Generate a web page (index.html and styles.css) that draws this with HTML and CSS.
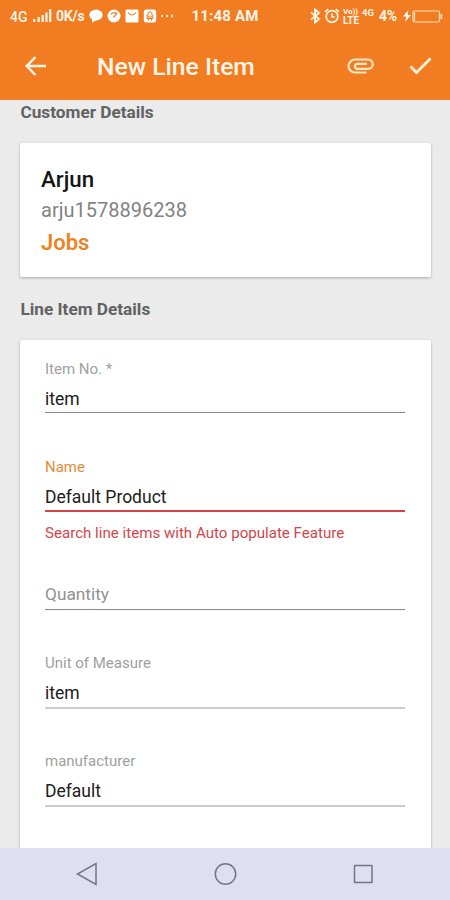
FILE: index.html
```html
<!DOCTYPE html>
<html lang="en">
<head>
<meta charset="utf-8">
<title>New Line Item</title>
<link rel="stylesheet" href="styles.css">
</head>
<body>
<div class="screen">
  <header class="top">
    <div class="status">
      <div class="status-left">
        <span class="net">4G</span>
        <svg class="signal" width="19" height="14" viewBox="0 0 19 14" fill="#fff3e0"><path d="M0 10h2.300v3H0zM4.500 8h2.300v5H4.500zM8.500 6h2.300v7H8.500zM12.300 3.500h2.300V13h-2.300zM16 0h2.300v13H16z"/></svg>
        <span class="speed">0K/s</span>
        <svg width="14" height="14" viewBox="0 0 14 14" fill="#fff"><ellipse cx="7" cy="6" rx="6.700" ry="5.400"/><path d="M3 9v4.500L8 11z"/></svg>
        <svg width="14" height="14" viewBox="0 0 14 14"><circle cx="7" cy="7" r="6.500" fill="#fff"/><path d="M3.800 5.200Q7 2.500 9.800 4.500L6.500 8.300" fill="none" stroke="#f07b20" stroke-width="1.200"/></svg>
        <svg width="14" height="14" viewBox="0 0 14 14"><rect x=".5" y=".5" width="13" height="13" rx="1.500" fill="#fff"/><path d="M3 3.500q4 5 8 0" fill="none" stroke="#f07b20" stroke-width="1.200"/></svg>
        <svg width="14" height="14" viewBox="0 0 14 14"><rect x=".8" y=".5" width="12.400" height="13" rx="2.500" fill="#fff"/><path d="M5 5a2 2.300 0 0 1 4 0v3H5zM4 6v3.500h6V6M5.500 10v1.500M8.500 10v1.500" fill="none" stroke="#f07b20" stroke-width="1"/></svg>
        <svg width="14" height="14" viewBox="0 0 14 14" fill="#fff3e0"><circle cx="1" cy="7" r="1.200"/><circle cx="6" cy="7" r="1.200"/><circle cx="11" cy="7" r="1.200"/></svg>
      </div>
      <span class="clock">11:48 AM</span>
      <div class="status-right">
        <svg width="11" height="16" viewBox="0 0 11 16" fill="none" stroke="#fff3e0" stroke-width="1.900"><path d="M1 4.500 9 11l-4 3.500v-13L9 5l-8 6.500"/></svg>
        <svg class="alarm" width="16" height="16" viewBox="0 0 16 16" fill="none" stroke="#fff3e0" stroke-width="1.700"><circle cx="8" cy="8.500" r="5.800"/><path d="M1 4l3.300-2.800M15 4l-3.300-2.800M8 5.500V9h3"/></svg>
        <span class="volte"><span>Vo))</span><span class="lte">LTE</span></span>
        <span class="net-small">4G</span>
        <span class="percent">4%</span>
        <svg class="bolt" width="8" height="12" viewBox="0 0 8 12" fill="#fff"><path d="M5.500 0 0 6.500h3.300L2 12l6-7H4.500z"/></svg>
        <svg class="battery" width="31" height="13" viewBox="0 0 31 13" fill="none" stroke="#ffe0b8" stroke-width="1.200"><rect x="1" y="1" width="26.500" height="11" rx="1.500"/><path d="M2.500 2v9" /><path d="M29.300 4v5" stroke-width="1.800"/></svg>
      </div>
    </div>
    <div class="appbar">
      <svg class="back" width="22" height="20" viewBox="0 0 22 20" fill="none" stroke="#fff5e8" stroke-width="2.500"><path d="M21 10H2M10.500 1 1.700 10l8.800 9"/></svg>
      <h1>New Line Item</h1>
      <svg class="clip" width="27" height="18" viewBox="0 0 27 18" fill="none" stroke="#ffe8c8" stroke-width="2.200"><path d="M19.500 15.500H8A6.500 6.500 0 0 1 8 2.500h13a4.700 4.700 0 0 1 0 9.400H10.500a2.300 2.300 0 0 1 0-5.100H20"/></svg>
      <svg class="check" width="23" height="18" viewBox="0 0 23 18" fill="none" stroke="#fff0d8" stroke-width="2.800"><path d="m1.500 9.500 6 6L21.500 1.500"/></svg>
    </div>
  </header>
  <main>
    <h2 class="customer-title">Customer Details</h2>
    <section class="card customer">
      <div class="name">Arjun</div>
      <div class="id">arju1578896238</div>
      <div class="jobs">Jobs</div>
    </section>
    <h2 class="line-title">Line Item Details</h2>
    <section class="card form">
      <div class="field">
        <label>Item No. *</label>
        <div class="value">item</div>
      </div>
      <div class="field error">
        <label>Name</label>
        <div class="value">Default Product</div>
        <p>Search line items with Auto populate Feature</p>
      </div>
      <div class="field empty">
        <div class="value">Quantity</div>
      </div>
      <div class="field light">
        <label>Unit of Measure</label>
        <div class="value">item</div>
      </div>
      <div class="field light">
        <label>manufacturer</label>
        <div class="value">Default</div>
      </div>
    </section>
  </main>
  <nav>
    <svg width="24" height="26" viewBox="0 0 24 26"><path d="M21 2.500v21L2.500 13z"/></svg>
    <svg width="24" height="26" viewBox="0 0 24 26"><circle cx="12.500" cy="13" r="10.200"/></svg>
    <svg width="24" height="26" viewBox="0 0 24 26"><rect x="3.500" y="4.500" width="17.500" height="17" rx=".5"/></svg>
  </nav>
</div>
</body>
</html>
```

FILE: styles.css
```css
* { box-sizing: border-box; }
body { margin: 0; font-family: Roboto, "Liberation Sans", sans-serif; }
h1, h2, p { margin: 0; }
svg { display: block; flex: none; }
.screen { width: 450px; height: 900px; display: flex; flex-direction: column; overflow: hidden; }
.top { height: 100px; flex: none; background: #f27c21; color: #fff5e8; }

.status { height: 32px; display: flex; align-items: center; padding: 0 7px 0 10px; font-weight: 500; white-space: nowrap; }
.status-left { width: 182px; display: flex; align-items: center; gap: 4px; }
.net { width: 19px; font-size: 14px; margin-top: 2px; }
.signal { margin-top: -1px; }
.speed { width: 28px; font-size: 14px; font-weight: 700; letter-spacing: -0.2px; margin-right: 1px; }
.clock { width: 117px; font-size: 15px; font-weight: 700; letter-spacing: 0.2px; }
.status-right { display: flex; align-items: center; margin-left: 2px; }
.alarm { margin-left: 3px; }
.volte { width: 17px; margin-left: 3px; display: flex; flex-direction: column; font-size: 8px; line-height: 10px; font-weight: 700; }
.lte { font-size: 10px; line-height: 10px; margin-top: -1px; }
.net-small { width: 13px; margin: -6px 0 0 2px; font-size: 9.5px; font-weight: 700; line-height: 10px; }
.percent { width: 20px; margin-left: 4px; font-size: 14px; letter-spacing: -0.4px; font-weight: 700; }
.bolt { margin-left: 4px; }
.battery { margin-left: 1px; }

.appbar { height: 68px; display: flex; align-items: center; padding: 0 18px 0 25px; }
h1 { width: 200px; margin-left: 50px; font-size: 24.7px; line-height: 30px; font-weight: 500; margin-top: 2px; white-space: nowrap; }
.clip { margin-left: 50px; }
.check { margin-left: auto; }

main { flex: 1; min-height: 0; overflow: hidden; background: #ebebeb; padding: 0 20px; }
h2 { font-size: 17.2px; line-height: 24px; font-weight: 700; color: #626262; padding-left: .5px; }
.card { background: #fff; border-radius: 2px; box-shadow: 0 1px 3px rgba(0, 0, 0, .28); width: 411px; }
.customer { height: 134px; margin-top: 19px; padding: 21px 21px; }
.customer div { line-height: 31px; white-space: nowrap; }
.name { font-size: 22.3px; font-weight: 500; color: #151515; }
.id { font-size: 20px; color: #828282; }
.customer .jobs { font-size: 22px; font-weight: 600; color: #ec841f; line-height: 33px; }
.line-title { margin-top: 20px; }
.form { height: 600px; margin-top: 19px; padding: 18px 26px 0 25px; }
.field { height: 98px; }
.field label { display: block; font-size: 15px; line-height: 22px; color: #a0a0a0; }
.value { box-sizing: content-box; height: 28px; line-height: 30px; padding-top: 4px; font-size: 17.5px; color: #202020; border-bottom: 1px solid #888; }
.error { height: 121px; }
.error label { color: #e58b38; }
.error .value { border-bottom: 2px solid #d94148; }
.error p { font-size: 15.1px; line-height: 22px; margin-top: 10px; color: #d2454b; white-space: nowrap; }
.empty { height: 75px; }
.empty .value { height: 30px; padding-top: 2px; font-size: 17.3px; color: #929292; }
.light .value { height: 29px; border-bottom: 2px solid #ccc; }

nav { height: 52px; flex: none; background: #dedff2; display: flex; align-items: center; justify-content: space-between; padding: 0 75px 0 75px; }
nav svg { fill: none; stroke: #777486; stroke-width: 1.5; }
```
